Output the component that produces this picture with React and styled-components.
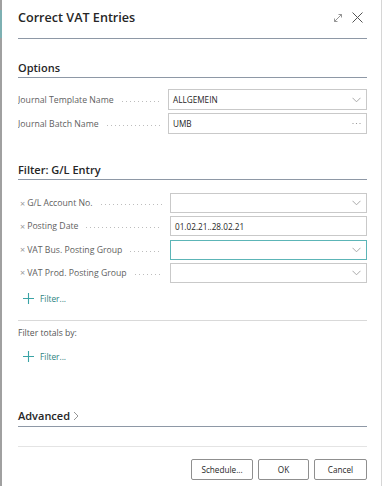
import React from 'react'
import styled, { createGlobalStyle } from 'styled-components'

const Global = createGlobalStyle`
  html, body { margin: 0; padding: 0; background: #fff; }
  body { font-family: "Open Sans", "Noto Sans", sans-serif; color: #212121; }
`

const Dialog = styled.div`
  width: 382px;
  height: 486px;
  box-sizing: border-box;
  background:
    linear-gradient(to bottom, #a0a0a0 10px, #7db0b2 10px, #7db0b2 38px, #a0a0a0 38px) left top / 2px 100% no-repeat,
    #fff;
  border-right: 1px solid #d6d6d6;
  padding: 0 14px 0 18px;
  display: flex;
  flex-direction: column;
  overflow: hidden;
`

const Header = styled.div`
  height: 39px;
  box-sizing: border-box;
  display: flex;
  align-items: center;
  justify-content: space-between;
  border-bottom: 1px solid #8e98a6;
  padding-bottom: 3px;
`

const Title = styled.div`
  font-size: 12.6px;
  font-weight: 600;
  color: #262626;
`

const HeaderIcons = styled.div`
  display: flex;
  align-items: center;
  gap: 9px;
  margin-right: 4px;
`

const SectionTitle = styled.div`
  margin-top: ${p => p.$top}px;
  height: 20px;
  box-sizing: border-box;
  font-size: 11px;
  font-weight: 600;
  line-height: 18px;
  color: #262626;
  border-bottom: 1px solid #8e98a6;
  display: flex;
  align-items: center;
  gap: 3px;
`

const Rows = styled.div`
  margin-top: ${p => p.$top}px;
  display: flex;
  flex-direction: column;
  gap: ${p => p.$gap}px;
`

const Row = styled.div`
  display: flex;
  align-items: center;
  height: ${p => p.$h}px;
`

const Label = styled.div`
  width: 150px;
  display: flex;
  align-items: center;
  font-size: 8.7px;
  color: #616161;
  white-space: nowrap;
  overflow: hidden;
  padding-left: ${p => (p.$x ? 2 : 0)}px;

  &::after {
    content: "";
    flex: 1;
    height: 1px;
    margin: 3px 8px 0 8px;
    background-image: linear-gradient(to right, #bdbdbd 1px, transparent 1px);
    background-size: 4px 1px;
  }
`

const Clear = styled.span`
  font-size: 9px;
  color: #9a9a9a;
  margin-right: 2px;
`

const Field = styled.div`
  flex: 1;
  height: 100%;
  box-sizing: border-box;
  border: 1px solid ${p => (p.$focus ? '#5cb5b7' : '#c9c9c9')};
  display: flex;
  align-items: center;
  padding: 0 5px 0 4px;
  font-size: 8.2px;
  color: #262626;

  & > svg { margin-left: auto; }
`

const AddFilter = styled.div`
  margin-top: ${p => p.$top}px;
  height: 20px;
  display: flex;
  align-items: center;
  gap: 6px;
  padding-left: 5px;
  font-size: 8.3px;
  color: #2c7f80;
`

const Separator = styled.div`
  margin-top: ${p => p.$top}px;
  height: 1px;
  background: ${p => p.$color || '#d9d9d9'};
`

const Note = styled.div`
  margin-top: 4px;
  line-height: 16px;
  font-size: 8.6px;
  color: #555;
`

const Footer = styled.div`
  margin-top: 12px;
  display: flex;
  justify-content: flex-end;
  gap: 5px;
`

const Button = styled.button`
  height: 21px;
  width: ${p => p.$w}px;
  box-sizing: border-box;
  border: 1px solid #8f8f8f;
  border-radius: 2px;
  background: #fff;
  font-family: inherit;
  font-size: 8.2px;
  color: #262626;
  padding: 0;
`

const Chevron = () => (
  <svg width="9" height="6" viewBox="0 0 9 6">
    <path d="M0.5 0.8 L4.5 4.8 L8.5 0.8" fill="none" stroke="#a0a0a0" strokeWidth="0.9" />
  </svg>
)

const Ellipsis = () => (
  <svg width="9" height="3" viewBox="0 0 9 3">
    <circle cx="1" cy="1.5" r="0.6" fill="#8a8a8a" />
    <circle cx="4.5" cy="1.5" r="0.6" fill="#8a8a8a" />
    <circle cx="8" cy="1.5" r="0.6" fill="#8a8a8a" />
  </svg>
)

const Plus = () => (
  <svg width="11" height="11" viewBox="0 0 11 11">
    <path d="M5.5 0 V11 M0 5.5 H11" stroke="#3aa3a5" strokeWidth="1.1" />
  </svg>
)

const filterRows = [
  { label: 'G/L Account No.', value: '', chevron: true },
  { label: 'Posting Date', value: '01.02.21..28.02.21' },
  { label: 'VAT Bus. Posting Group', value: '', chevron: true, focus: true },
  { label: 'VAT Prod. Posting Group', value: '', chevron: true },
]

export default function App() {
  return (
    <>
      <Global />
      <Dialog>
        <Header>
          <Title>Correct VAT Entries</Title>
          <HeaderIcons>
            <svg width="10" height="10" viewBox="0 0 10 10">
              <path d="M1.5 8.5 L8.5 1.5 M5.5 1.5 H8.5 V4.5 M1.5 5.5 V8.5 H4.5" fill="none" stroke="#8a8a8a" strokeWidth="0.9" />
            </svg>
            <svg width="11" height="11" viewBox="0 0 11 11">
              <path d="M0.5 0.5 L10.5 10.5 M10.5 0.5 L0.5 10.5" stroke="#555" strokeWidth="1" />
            </svg>
          </HeaderIcons>
        </Header>

        <SectionTitle $top={19}>Options</SectionTitle>
        <Rows $top={11} $gap={3}>
          <Row $h={21}>
            <Label>Journal Template Name</Label>
            <Field>ALLGEMEIN<Chevron /></Field>
          </Row>
          <Row $h={21}>
            <Label>Journal Batch Name</Label>
            <Field>UMB<Ellipsis /></Field>
          </Row>
        </Rows>

        <SectionTitle $top={26}>Filter: G/L Entry</SectionTitle>
        <Rows $top={13} $gap={3.3}>
          {filterRows.map(r => (
            <Row $h={20} key={r.label}>
              <Label $x><Clear>×</Clear>{r.label}</Label>
              <Field $focus={r.focus}>{r.value}{r.chevron && <Chevron />}</Field>
            </Row>
          ))}
        </Rows>
        <AddFilter $top={6}><Plus />Filter...</AddFilter>

        <Separator $top={11} />
        <Note>Filter totals by:</Note>
        <AddFilter $top={6}><Plus />Filter...</AddFilter>

        <SectionTitle $top={40}>
          Advanced
          <svg width="6" height="10" viewBox="0 0 6 10">
            <path d="M1 1 L5 5 L1 9" fill="none" stroke="#8a8a8a" strokeWidth="0.9" />
          </svg>
        </SectionTitle>
        <Separator $top={19} $color="#e4e4e4" />
        <Footer>
          <Button $w={62}>Schedule...</Button>
          <Button $w={51}>OK</Button>
          <Button $w={53}>Cancel</Button>
        </Footer>
      </Dialog>
    </>
  )
}
